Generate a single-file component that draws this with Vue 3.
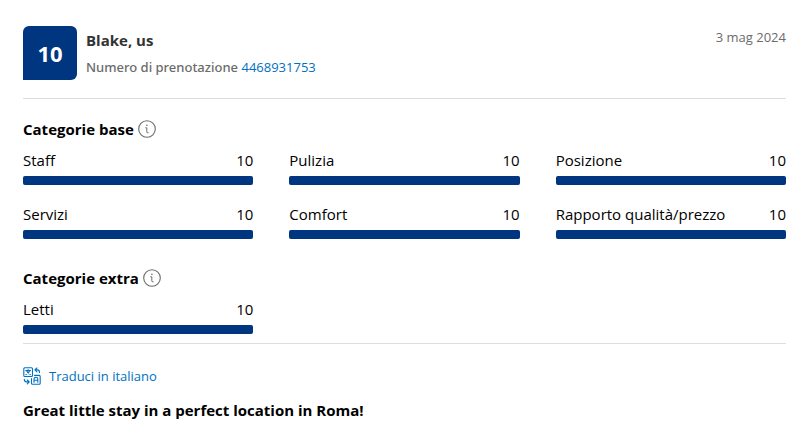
<script setup>
const booking = { guest: 'Blake, us', number: '4468931753', date: '3 mag 2024', score: 10 }

const groups = [
  {
    id: 'base',
    title: 'Categorie base',
    items: [
      { label: 'Staff', score: 10 },
      { label: 'Pulizia', score: 10 },
      { label: 'Posizione', score: 10 },
      { label: 'Servizi', score: 10 },
      { label: 'Comfort', score: 10 },
      { label: 'Rapporto qualità/prezzo', score: 10 },
    ],
  },
  { id: 'extra', title: 'Categorie extra', items: [{ label: 'Letti', score: 10 }] },
]
</script>

<template>
  <article class="review">
    <header class="head">
      <div class="badge">{{ booking.score }}</div>
      <div class="who">
        <div class="guest">{{ booking.guest }}</div>
        <div class="booking">
          <span class="booking-label">Numero di prenotazione</span>
          {{ ' ' }}<a href="#">{{ booking.number }}</a>
        </div>
      </div>
      <time class="date" datetime="2024-05-03">{{ booking.date }}</time>
    </header>

    <div class="scores">
      <section v-for="group in groups" :key="group.id">
        <div class="group-head">
          <h3>{{ group.title }}</h3>
          <button class="info" type="button" :aria-label="group.title">
            <svg viewBox="0 0 18 18" width="18" height="18" fill="none" aria-hidden="true">
              <circle cx="9" cy="9" r="8.3" stroke="#6b6b6b" stroke-width="1.1" />
              <circle cx="8.9" cy="5.2" r="0.8" fill="#6b6b6b" />
              <path d="M7.7 7.8h1.1v4.1q0 .9.9.9h.5" stroke="#6b6b6b" stroke-width="1" stroke-linecap="round" />
            </svg>
          </button>
        </div>
        <div class="grid">
          <div v-for="item in group.items" :key="item.label" class="item">
            <div class="item-text">
              <span>{{ item.label }}</span>
              <span>{{ item.score }}</span>
            </div>
            <div class="track">
              <div class="fill" :style="{ width: item.score * 10 + '%' }"></div>
            </div>
          </div>
        </div>
      </section>
    </div>

    <button class="translate" type="button">
      <svg viewBox="0 0 18 18" width="18" height="18" fill="none" stroke="#0071c2" stroke-width="1.1" stroke-linecap="round" stroke-linejoin="round" aria-hidden="true">
        <rect x="0.8" y="0.8" width="8.7" height="8.7" rx="1" />
        <path d="M2.8 3.6h4.7M5.1 2.5v1.1M6.7 3.7c-.5 1.7-1.8 3-3.7 3.9M3.7 3.9c.6 1.6 1.8 2.9 3.6 3.7" />
        <path d="M11.5 8.4h4.7a1 1 0 0 1 1 1v6.8a1 1 0 0 1-1 1H9.5a1 1 0 0 1-1-1V11.5" />
        <path d="M11 15.2v-3.1a1.9 1.9 0 0 1 3.8 0v3.1M11 13.3h3.8" />
        <path d="M12 2.9h2.3q2.2 0 2.2 2.7M13.9 1l-2 1.9 2 1.9" />
        <path d="M1.3 12.2q0 2.7 2.4 2.7h2.4M4.3 13l2 1.9-2 1.9" />
      </svg>
      <span>Traduci in italiano</span>
    </button>

    <h2 class="title">Great little stay in a perfect location in Roma!</h2>
  </article>
</template>

<style>
body {
  margin: 0;
  background: #fff;
}
</style>

<style scoped>
.review {
  padding: 26px 21px 5px 23px;
  font-family: "Segoe UI", "Open Sans", "Noto Sans", sans-serif;
  font-size: 15px;
  line-height: 24px;
  color: #000;
}
.head {
  display: flex;
  align-items: flex-start;
  gap: 9px;
  padding-bottom: 18px;
  border-bottom: 1px solid #dedede;
}
.badge {
  display: flex;
  align-items: center;
  justify-content: center;
  width: 54px;
  height: 54px;
  border-radius: 6px 6px 6px 0;
  background: #003580;
  color: #fff;
  font-size: 22px;
  font-weight: 700;
}
.who {
  flex: 1;
  padding-top: 2px;
}
.guest {
  font-size: 15px;
  font-weight: 700;
  color: #333;
}
.booking {
  padding-top: 3px;
  font-size: 13px;
  color: #6b6b6b;
}
.booking-label {
  font-family: "Segoe UI", "Noto Sans", sans-serif;
  font-weight: 500;
}
a {
  color: #0071c2;
  text-decoration: none;
}
.date {
  font-size: 13px;
  line-height: 22px;
  color: #6b6b6b;
}
.scores {
  display: flex;
  flex-direction: column;
  gap: 27px;
  padding: 18px 0 9px;
  border-bottom: 1px solid #dedede;
}
.group-head {
  display: flex;
  align-items: center;
  gap: 4px;
  margin-bottom: 7px;
}
h3,
.title {
  margin: 0;
  font-size: 15px;
  line-height: 24px;
  font-weight: 700;
  color: #000;
}
button {
  padding: 0;
  border: 0;
  background: none;
  font-family: inherit;
  cursor: pointer;
}
.info {
  display: flex;
}
.grid {
  display: grid;
  grid-template-columns: repeat(3, 1fr);
  gap: 17px 36px;
}
.item-text {
  display: flex;
  justify-content: space-between;
  margin-bottom: 4px;
}
.track {
  height: 9px;
  border-radius: 2px;
  background: #e6e6e6;
}
.fill {
  height: 100%;
  border-radius: 2px;
  background: #003580;
}
.translate {
  display: flex;
  align-items: center;
  gap: 8px;
  margin: 22px 0 12px;
  font-size: 13px;
  line-height: 20px;
  color: #0071c2;
}
</style>
